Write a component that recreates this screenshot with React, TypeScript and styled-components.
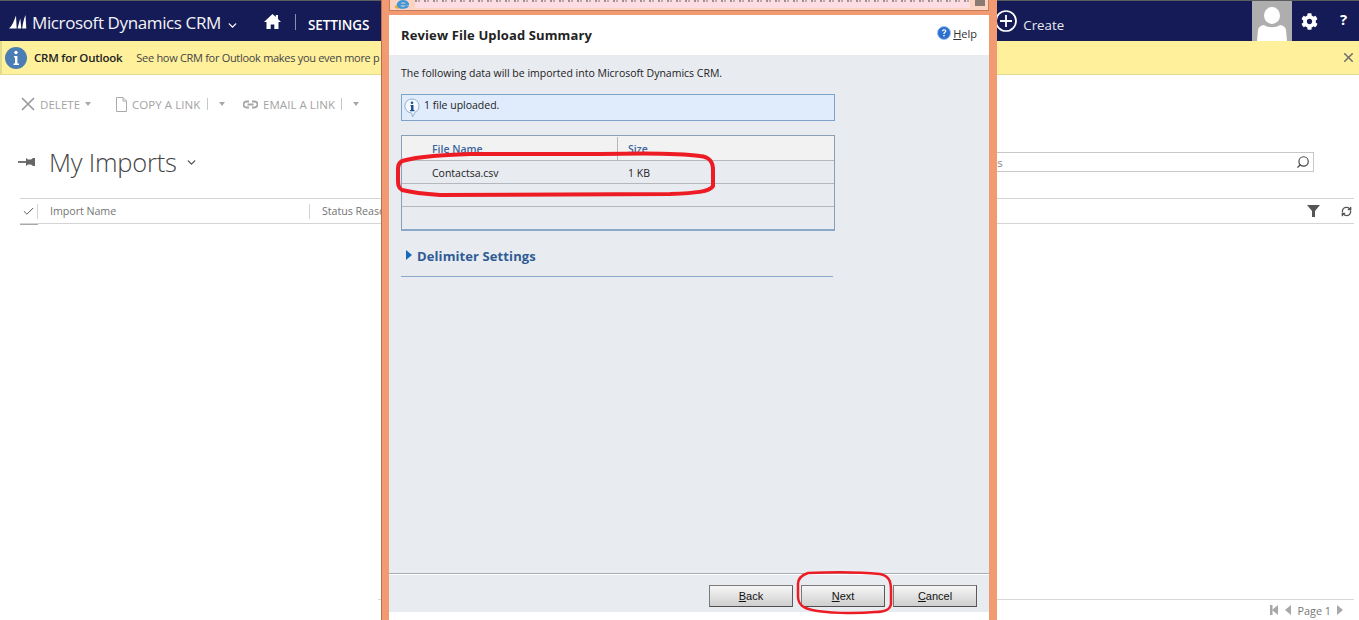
import React from "react";
import styled, { createGlobalStyle } from "styled-components";
import { ChevronDown, X, Search, RefreshCw, Check } from "lucide-react";
import { FaCog } from "react-icons/fa";

const GlobalStyle = createGlobalStyle`
  html, body {
    margin: 0;
    padding: 0;
    background: #fff;
  }
  body {
    font-family: "Open Sans", "Liberation Sans", sans-serif;
    width: 1359px;
    height: 620px;
    overflow: hidden;
  }
  * { box-sizing: border-box; }
`;

const Page = styled.div`
  position: relative;
  width: 1359px;
  height: 620px;
  overflow: hidden;
  display: flex;
  flex-direction: column;
`;

const NavBar = styled.header`
  height: 41px;
  flex: none;
  background: #151b56;
  border-top: 1px solid #5d5d5d;
  display: flex;
  align-items: center;
  color: #fff;
  padding-left: 9px;
`;

const Brand = styled.span`
  font-size: 17px;
  margin: 3px 0 0 5px;
  letter-spacing: -0.38px;
  color: #f2f3f8;
`;

const NavChevron = styled(ChevronDown)`
  margin: 8px 0 0 5px;
`;

const HomeButton = styled.span`
  display: flex;
  margin-left: 25px;
`;

const NavDivider = styled.span`
  width: 1px;
  height: 16px;
  background: #8d90ac;
  margin: 2px 12px 0 14px;
`;

const NavSection = styled.span`
  font-size: 13.5px;
  font-weight: 600;
  letter-spacing: -0.1px;
  margin-top: 8px;
`;

const CreateArea = styled.div`
  display: flex;
  align-items: center;
  gap: 6px;
  margin-left: 626px;
  font-size: 13.3px;
  color: #e8e9f0;
  & > span {
    margin-top: 7px;
  }
`;

const Avatar = styled.div`
  width: 40px;
  height: 40px;
  background: #aeaeae;
  margin-left: auto;
  display: flex;
`;

const NavIcons = styled.div`
  width: 67px;
  display: flex;
  align-items: center;
  padding-left: 9px;
  gap: 20px;
`;

const Help = styled.span`
  font-size: 15px;
  font-weight: 700;
  margin-top: -4px;
  margin-left: 2px;
`;

const Notice = styled.div`
  height: 34px;
  flex: none;
  background: #fff09c;
  border-bottom: 1px solid #dfdc90;
  border-left: 2px solid #dfdc90;
  display: flex;
  align-items: center;
  color: #333;
  padding-left: 3px;
`;

const NoticeTitle = styled.b`
  font-size: 11.5px;
  font-weight: 600;
  margin-left: 7px;
  letter-spacing: -0.25px;
  color: #222;
`;

const NoticeText = styled.span`
  font-size: 11px;
  margin-left: 14px;
  letter-spacing: -0.3px;
  color: #444;
`;

const NoticeClose = styled(X)`
  margin-left: auto;
  margin-right: 3px;
  color: #6f6f6f;
`;

const Toolbar = styled.div`
  height: 58px;
  flex: none;
  display: flex;
  align-items: center;
  padding-left: 21px;
  font-size: 11.5px;
  color: #a3a3a3;
  letter-spacing: 0.05px;
  white-space: nowrap;
`;

const ToolItem = styled.span<{ $width: number; $offset?: number }>`
  width: ${(p) => p.$width}px;
  margin-left: ${(p) => p.$offset ?? 0}px;
  flex: none;
  display: flex;
  align-items: center;
  gap: 5px;
`;

const Caret = styled.span`
  width: 0;
  height: 0;
  border-left: 3.5px solid transparent;
  border-right: 3.5px solid transparent;
  border-top: 4px solid #a8a8a8;
`;

const ToolSep = styled.span`
  width: 1px;
  height: 12px;
  background: #c8c8c8;
  margin-right: 11px;
`;

const TitleRow = styled.div`
  height: 65px;
  flex: none;
  display: flex;
  align-items: center;
  padding: 0 45px 7px 18px;
`;

const Title = styled.h1`
  margin: 0 0 0 13px;
  font-size: 25.5px;
  font-weight: 300;
  color: #444;
  letter-spacing: -0.2px;
`;

const TitleChevron = styled(ChevronDown)`
  margin-left: 8px;
  color: #555;
`;

const SearchBox = styled.div`
  margin-left: auto;
  width: 411px;
  height: 20px;
  border: 1px solid #c8c8c8;
  display: flex;
  align-items: center;
  justify-content: space-between;
  padding-right: 3px;
  font-size: 11.5px;
  color: #888;
`;

const SearchIcon = styled(Search)`
  transform: scaleX(-1);
  color: #444;
`;

const GridHeader = styled.div`
  height: 26px;
  flex: none;
  margin: 0 5px 0 20px;
  border-top: 1px solid #d4d4d4;
  border-bottom: 1px solid #d4d4d4;
  display: flex;
  align-items: center;
  font-size: 10.7px;
  color: #757575;
  position: relative;
`;

const CheckCell = styled.span`
  width: 18px;
  height: 15px;
  display: flex;
  justify-content: center;
  align-items: center;
  border-right: 1px solid #d4d4d4;
`;

const ColumnHead = styled.span<{ $width: number }>`
  width: ${(p) => p.$width}px;
  height: 15px;
  line-height: 14px;
  padding-left: 12px;
  flex: none;
  border-right: 1px solid #d4d4d4;
  white-space: nowrap;
  letter-spacing: -0.05px;
`;

const GridTools = styled.div`
  margin-left: auto;
  display: flex;
  align-items: center;
  gap: 21px;
  padding-right: 2px;
`;

const CheckUnderline = styled.span`
  position: absolute;
  left: 0;
  bottom: -2px;
  width: 18px;
  height: 1px;
  background: #a9a9a9;
`;

const Spacer = styled.div`
  flex: 1;
`;

const Pager = styled.footer`
  height: 21px;
  flex: none;
  margin: 0 5px 0 378px;
  border-top: 1px solid #d8d8d8;
  display: flex;
  align-items: center;
  justify-content: flex-end;
  font-size: 10.8px;
  color: #777;
  padding-right: 8px;
`;

const PageLabel = styled.span`
  margin: 0 5px 0 6px;
`;

const PagerIcon = styled.svg<{ $flip?: boolean; $spaced?: boolean }>`
  transform: ${(p) => (p.$flip ? "scaleX(-1)" : "none")};
  margin-right: ${(p) => (p.$spaced ? 3 : 0)}px;
`;

const Dialog = styled.div`
  position: absolute;
  left: 381px;
  top: 0;
  width: 616px;
  height: 620px;
  background: #f29a72;
  border-left: 1px solid #b8704f;
  padding: 0 8px 0 7px;
  display: flex;
  flex-direction: column;
`;

const AddressBar = styled.div`
  height: 11px;
  flex: none;
  background: #fcd3c0;
  border: 1px solid #c87d5c;
  border-top: 0;
  display: flex;
  align-items: flex-start;
  justify-content: space-between;
  padding-left: 5px;
  padding-right: 3px;
`;

const Address = styled.div`
  flex: 1;
  height: 8px;
  margin: 0 5px 0 4px;
  background:
    repeating-linear-gradient(90deg, #9a8f94 0 2px, #fedce4 2px 3px, #b9aab0 3px 5px, #fedce4 5px 9px) 0 0 / 100% 2px no-repeat,
    #fedce4;
`;

const AddressThumb = styled.div`
  width: 10px;
  height: 6px;
  background: #8b7a72;
`;

const Content = styled.main`
  margin-top: 4px;
  height: 605px;
  flex: none;
  background: #e8ebf0;
  display: flex;
  flex-direction: column;
`;

const DialogHeader = styled.div`
  height: 40px;
  flex: none;
  background: #fff;
  display: flex;
  align-items: center;
  justify-content: space-between;
  padding: 0 12px;
`;

const DialogTitle = styled.h2`
  margin: 0;
  font-size: 13px;
  font-weight: 700;
  color: #222;
  letter-spacing: 0.12px;
`;

const HelpLink = styled.span`
  display: flex;
  align-items: center;
  gap: 2px;
  font-size: 11px;
  color: #333;
  margin-top: -4px;
  & u { text-underline-offset: 1px; }
`;

const DialogBody = styled.div`
  flex: 1;
  padding: 10px 12px 0;
  display: flex;
  flex-direction: column;
`;

const Intro = styled.p`
  margin: 0;
  height: 16px;
  line-height: 16px;
  font-size: 10.5px;
  color: #222;
`;

const InfoBox = styled.div`
  margin-top: 13px;
  width: 434px;
  height: 27px;
  background: #e0ecfb;
  border: 1px solid #7ea3c8;
  display: flex;
  align-items: flex-start;
  gap: 4px;
  padding: 3px 0 0 2px;
  font-size: 10.5px;
  line-height: 14px;
  color: #222;
`;

const FileTable = styled.div`
  margin-top: 14px;
  width: 434px;
  height: 96px;
  border: 1px solid #8ba0b6;
  border-bottom: 2px solid #8ba8c8;
  display: flex;
  flex-direction: column;
`;

const HeadRow = styled.div`
  height: 25px;
  flex: none;
  background: #f2f2f2;
  border-bottom: 1px solid #b4b8bc;
  display: flex;
  font-size: 10.5px;
  font-weight: 600;
  color: #3c669c;
  padding-top: 1px;
`;

const Row = styled.div`
  height: 23px;
  flex: none;
  border-bottom: 1px solid #b4b8bc;
  display: flex;
  align-items: center;
  font-size: 10.5px;
  color: #222;
  padding-top: 2px;
  &:last-child { border-bottom: 0; }
`;

const NameCell = styled.div<{ $divided?: boolean }>`
  width: 216px;
  flex: none;
  padding-left: 30px;
  display: flex;
  align-items: center;
  height: 100%;
  border-right: ${(p) => (p.$divided ? "1px solid #b4b8bc" : "0")};
`;

const SizeCell = styled.div`
  padding-left: 10px;
  display: flex;
  align-items: center;
`;

const Section = styled.div`
  margin-top: 15px;
  width: 432px;
  height: 31px;
  border-bottom: 1px solid #8ba8c8;
  display: flex;
  align-items: flex-start;
  gap: 5px;
  padding-left: 5px;
  font-size: 13px;
  line-height: 21px;
  font-weight: 700;
  color: #2f5b94;
  letter-spacing: 0.1px;
`;

const Triangle = styled.span`
  margin-top: 4px;
  width: 0;
  height: 0;
  border-top: 5px solid transparent;
  border-bottom: 5px solid transparent;
  border-left: 6px solid #1668b8;
`;

const DialogFooter = styled.div`
  height: 39px;
  flex: none;
  border-top: 1px solid #a9adb2;
  box-shadow: inset 0 1px 0 #fff;
  display: flex;
  justify-content: flex-end;
  align-items: flex-start;
  gap: 8px;
  padding: 11px 12px 0 0;
`;

const FooterButton = styled.button`
  width: 84px;
  height: 22px;
  padding: 0;
  border: 1px solid #7a7a7a;
  border-bottom-color: #4f4f4f;
  border-right-color: #5a5a5a;
  background: linear-gradient(#f6f6f6, #cfcfcf);
  font-family: "Liberation Sans", Arial, sans-serif;
  font-size: 11px;
  color: #111;
`;

const WhiteStrip = styled.div`
  height: 8px;
  flex: none;
  background: #fff;
`;

const Annotation = styled.svg`
  position: absolute;
  left: 0;
  top: 0;
  pointer-events: none;
`;

const PinIcon = () => (
  <svg width="18" height="12" viewBox="0 0 18 12">
    <path d="M0 6h9" stroke="#666" strokeWidth="1.8" />
    <path d="M8 2l2 1.500h3L15 2h2v8h-2l-2-1.500h-3L8 10z" fill="#666" />
  </svg>
);

const Logo = () => (
  <svg width="18" height="16" viewBox="0 0 18 16">
    <path
      d="M0 15.500C3 13 5 8 7 2.500L7.700 15.500ZM8.600 15.500C9.500 11.500 10.300 8.500 11.300 5.500L12.300 15.500ZM13.200 15.500C13.800 10.500 14.800 6 16.500 2L17.300 15.500Z"
      fill="#fff"
    />
  </svg>
);

const HomeIcon = () => (
  <svg width="17" height="15" viewBox="0 0 17 15">
    <path d="M8.500 0L0 8h2.500v7h4.200v-4.500h3.600V15h4.200V8H17l-3-2.900V1h-2.200v2z" fill="#fff" />
  </svg>
);

const PlusCircle = () => (
  <svg width="22" height="22" viewBox="0 0 22 22">
    <circle cx="11" cy="11" r="10" fill="none" stroke="#fff" strokeWidth="1.7" />
    <path d="M11 5v12M5 11h12" stroke="#fff" strokeWidth="1.8" />
  </svg>
);

const Person = () => (
  <svg width="40" height="40" viewBox="0 0 40 40">
    <ellipse cx="20" cy="14.500" ry="8.500" rx="8" fill="#fff" />
    <path d="M5 40l1-11c.5-3 3-4.500 6-5 4 3 12 3 16 0 3 .5 5.500 2 6 5l1 11z" fill="#fff" />
  </svg>
);

const InfoDisc = () => (
  <svg width="22" height="22" viewBox="0 0 22 22">
    <circle cx="11" cy="11" r="11" fill="#4a7db3" />
    <circle cx="11" cy="5.500" r="1.700" fill="#fff" />
    <path d="M9 9h3.400v7.500H14V18H8.500v-1.500H10V10.400H9z" fill="#fff" />
  </svg>
);

const CrossIcon = () => (
  <svg width="14" height="14" viewBox="0 0 14 14">
    <path d="M1 1l12 12M13 1L1 13" stroke="#9a9a9a" strokeWidth="1.7" fill="none" />
  </svg>
);

const DocIcon = () => (
  <svg width="11" height="15" viewBox="0 0 11 15">
    <path d="M.5.500h6.500l3.500 3.500v10.500H.5zM7 .5V4h3.500" stroke="#aaa" fill="none" />
  </svg>
);

const LinkIcon = () => (
  <svg width="15" height="9" viewBox="0 0 15 9">
    <path d="M6 7.500H3.500a3 3 0 0 1 0-6H6M9 1.500h2.500a3 3 0 0 1 0 6H9M4.500 4.500h6" stroke="#a5a5a5" strokeWidth="1.800" fill="none" />
  </svg>
);

const BubbleInfo = () => (
  <svg width="16" height="20" viewBox="0 0 16 20">
    <path
      d="M8 1a7 7 0 0 1 3 13.300L8.500 19l-.8-4A7 7 0 0 1 8 1z"
      fill="#f4f8fd"
      stroke="#8fb0d4"
    />
    <circle cx="8" cy="4.800" r="1.300" fill="#1c4f94" />
    <path d="M6.500 7h3v5h1v1.300h-4.500V12h1V8.200h-.5z" fill="#1c4f94" />
  </svg>
);

const HelpIcon = () => (
  <svg width="14" height="14" viewBox="0 0 14 14">
    <circle cx="7" cy="7" r="6.500" fill="#2b6fd0" stroke="#9cc0ee" />
    <path
      d="M4.800 5.300C5 3.800 6 3.200 7.200 3.200c1.300 0 2.200.8 2.200 1.900 0 1.600-1.800 1.600-1.800 3H6.300c0-2 1.700-2 1.700-3 0-.5-.3-.8-.8-.8-.6 0-.9.4-1 1z"
      fill="#fff"
    />
    <rect x="6.300" y="9" width="1.400" height="1.400" fill="#fff" />
  </svg>
);

const IeIcon = () => (
  <svg width="16" height="9" viewBox="0 0 16 9">
    <path d="M2 3.500C3 1 5.500 0 8 0s5 1 6 3.500v2H5.500C6 7 9 7.200 11 5.500l3 1C12 9 6 9.500 3.500 8 1.500 7 1.500 5 2 3.500z" fill="#3a97dc" />
    <path d="M5.500 3.500h5.500C10.500 2 6 2 5.500 3.500z" fill="#fcd3c0" />
    <path d="M0 6c0 2.500 2 3 4 2.500L1.500 5z" fill="#e8a82c" />
  </svg>
);

const FilterIcon = () => (
  <svg width="13" height="12" viewBox="0 0 13 12">
    <path d="M0 0h13L8 6v6H5V6z" fill="#555" />
  </svg>
);

const Skip = ({ flip, bar, spaced }: { flip?: boolean; bar?: boolean; spaced?: boolean }) => (
  <PagerIcon width="10" height="10" viewBox="0 0 10 10" $flip={flip} $spaced={spaced}>
    {bar && <rect x="1" y="0" width="2.500" height="10" fill="#a8a8a8" />}
    <path d="M9 0v10L3 5z" fill="#a8a8a8" />
  </PagerIcon>
);

const App = () => {
  return (
    <Page>
      <GlobalStyle />
      <NavBar>
        <Logo />
        <Brand>Microsoft Dynamics CRM</Brand>
        <NavChevron size={13} strokeWidth={2.5} />
        <HomeButton>
          <HomeIcon />
        </HomeButton>
        <NavDivider />
        <NavSection>SETTINGS</NavSection>
        <CreateArea>
          <PlusCircle />
          <span>Create</span>
        </CreateArea>
        <Avatar>
          <Person />
        </Avatar>
        <NavIcons>
          <FaCog size={17} />
          <Help>?</Help>
        </NavIcons>
      </NavBar>

      <Notice>
        <InfoDisc />
        <NoticeTitle>CRM for Outlook</NoticeTitle>
        <NoticeText>See how CRM for Outlook makes you even more p</NoticeText>
        <NoticeClose size={15} strokeWidth={2.5} />
      </Notice>

      <Toolbar>
        <ToolItem $width={95}>
          <CrossIcon />
          <span>DELETE</span>
          <Caret />
        </ToolItem>
        <ToolItem $width={91}>
          <DocIcon />
          <span>COPY A LINK</span>
        </ToolItem>
        <ToolSep />
        <Caret />
        <ToolItem $width={98} $offset={18}>
          <LinkIcon />
          <span>EMAIL A LINK</span>
        </ToolItem>
        <ToolSep />
        <Caret />
      </Toolbar>

      <TitleRow>
        <PinIcon />
        <Title>My Imports</Title>
        <TitleChevron size={13} strokeWidth={2.5} />
        <SearchBox>
          <span>Search for records</span>
          <SearchIcon size={14} strokeWidth={2} />
        </SearchBox>
      </TitleRow>

      <GridHeader>
        <CheckCell>
          <Check size={13} strokeWidth={1.8} color="#555" />
        </CheckCell>
        <CheckUnderline />
        <ColumnHead $width={272}>Import Name</ColumnHead>
        <ColumnHead $width={200}>Status Reason</ColumnHead>
        <GridTools>
          <FilterIcon />
          <RefreshCw size={11} strokeWidth={3} color="#555" />
        </GridTools>
      </GridHeader>

      <Spacer />

      <Pager>
        <Skip bar spaced />
        <Skip />
        <PageLabel>Page 1</PageLabel>
        <Skip flip />
      </Pager>

      <Dialog>
        <AddressBar>
          <IeIcon />
          <Address />
          <AddressThumb />
        </AddressBar>
        <Content>
          <DialogHeader>
            <DialogTitle>Review File Upload Summary</DialogTitle>
            <HelpLink>
              <HelpIcon />
              <span>
                <u>H</u>elp
              </span>
            </HelpLink>
          </DialogHeader>
          <DialogBody>
            <Intro>The following data will be imported into Microsoft Dynamics CRM.</Intro>
            <InfoBox>
              <BubbleInfo />
              <span>1 file uploaded.</span>
            </InfoBox>
            <FileTable>
              <HeadRow>
                <NameCell $divided>File Name</NameCell>
                <SizeCell>Size</SizeCell>
              </HeadRow>
              <Row>
                <NameCell>Contactsa.csv</NameCell>
                <SizeCell>1 KB</SizeCell>
              </Row>
              <Row />
              <Row />
            </FileTable>
            <Section>
              <Triangle />
              <span>Delimiter Settings</span>
            </Section>
          </DialogBody>
          <DialogFooter>
            <FooterButton>
              <u>B</u>ack
            </FooterButton>
            <FooterButton>
              <u>N</u>ext
            </FooterButton>
            <FooterButton>
              <u>C</u>ancel
            </FooterButton>
          </DialogFooter>
          <WhiteStrip />
        </Content>
      </Dialog>

      <Annotation width="1359" height="620" viewBox="0 0 1359 620">
        <path
          d="M402 161C420 156 445 155 470 154L600 154C640 153 680 153 700 156C710 157 713 162 713 170V186C710 192 695 193 670 194L440 195C425 194 410 192 402 190C398 188 398 184 398 178V168C398 165 399 163 402 161"
          fill="none"
          stroke="#ed1c24"
          strokeWidth="4"
        />
        <path
          d="M808 573C830 572 860 572 880 574C889 576 891 581 891 590V604C890 610 885 612 875 612C855 614 825 613 812 610C802 608 798 604 798 596V584C798 578 802 575 808 573Z"
          fill="none"
          stroke="#ed1c24"
          strokeWidth="2.500"
        />
      </Annotation>
    </Page>
  );
};

export default App;
